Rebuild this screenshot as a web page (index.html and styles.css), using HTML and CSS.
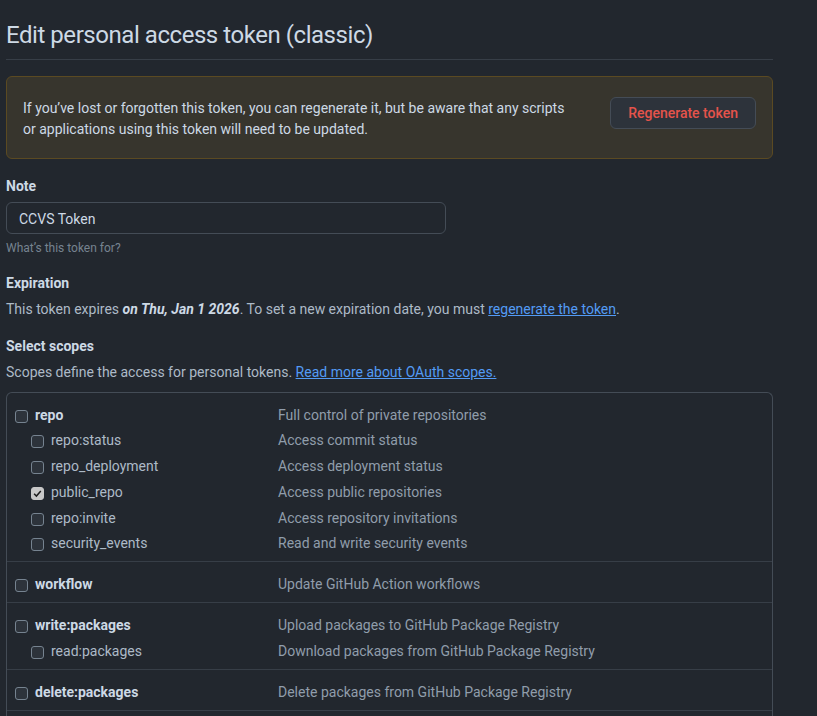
FILE: index.html
```html
<!DOCTYPE html>
<html>
<head>
<meta charset="utf-8">
<link rel="stylesheet" href="styles.css">
</head>
<body>
<div class="page">
  <h1 class="title">Edit personal access token (classic)</h1>

  <div class="flash">
    <p class="flash-text">If you’ve lost or forgotten this token, you can regenerate it, but be aware that any scripts<br>or applications using this token will need to be updated.</p>
    <button class="btn-danger">Regenerate token</button>
  </div>

  <div class="group group-note">
    <div class="label">Note</div>
    <div class="input">CCVS Token</div>
    <div class="hint">What’s this token for?</div>
  </div>

  <div class="group group-exp">
    <div class="label">Expiration</div>
    <p class="text">This token expires <em class="date">on Thu, Jan 1 2026</em>. To set a new expiration date, you must <a class="link" href="#">regenerate the token</a>.</p>
  </div>

  <div class="group group-scopes">
    <div class="label">Select scopes</div>
    <p class="text">Scopes define the access for personal tokens. <a class="link" href="#">Read more about OAuth scopes.</a></p>
  </div>

  <div class="scopes">
    <div class="scope-group">
      <div class="row main"><span class="name"><span class="cb"></span>repo</span><span class="desc">Full control of private repositories</span></div>
      <div class="row sub"><span class="name"><span class="cb"></span>repo:status</span><span class="desc">Access commit status</span></div>
      <div class="row sub"><span class="name"><span class="cb"></span>repo_deployment</span><span class="desc">Access deployment status</span></div>
      <div class="row sub"><span class="name"><span class="cb checked"><svg viewBox="0 0 12 12" width="11" height="11"><path d="M2.3 6.3 L4.8 8.8 L9.6 3.2" fill="none" stroke="#1c1c1c" stroke-width="1.6"/></svg></span>public_repo</span><span class="desc">Access public repositories</span></div>
      <div class="row sub"><span class="name"><span class="cb"></span>repo:invite</span><span class="desc">Access repository invitations</span></div>
      <div class="row sub"><span class="name"><span class="cb"></span>security_events</span><span class="desc">Read and write security events</span></div>
    </div>
    <div class="scope-group">
      <div class="row main"><span class="name"><span class="cb"></span>workflow</span><span class="desc">Update GitHub Action workflows</span></div>
    </div>
    <div class="scope-group">
      <div class="row main"><span class="name"><span class="cb"></span>write:packages</span><span class="desc">Upload packages to GitHub Package Registry</span></div>
      <div class="row sub"><span class="name"><span class="cb"></span>read:packages</span><span class="desc">Download packages from GitHub Package Registry</span></div>
    </div>
    <div class="scope-group">
      <div class="row main"><span class="name"><span class="cb"></span>delete:packages</span><span class="desc">Delete packages from GitHub Package Registry</span></div>
    </div>
    <div class="scope-group empty"></div>
  </div>
</div>
</body>
</html>
```

FILE: styles.css
```css
html, body {
  margin: 0;
  padding: 0;
  background: #22272e;
  height: 100%;
  overflow: hidden;
}
body {
  font-family: Roboto, "Noto Sans", sans-serif;
  font-size: 14px;
  line-height: 21px;
  color: #adbac7;
}
.page {
  width: 767px;
  padding-left: 6px;
}
.title {
  margin: 0 0 16px 0;
  padding: 20px 0 9px 0;
  font-size: 24px;
  line-height: 30px;
  font-weight: 400;
  letter-spacing: -0.45px;
  color: #cdd9e5;
  border-bottom: 1px solid #373e47;
}
.flash {
  display: flex;
  justify-content: space-between;
  align-items: flex-start;
  padding: 20px 16px 19px 16px;
  background: #37352d;
  border: 1px solid #5b4a22;
  border-radius: 6px;
}
.flash-text {
  margin: 0;
  padding-top: 1px;
  margin-bottom: -1px;
  color: #cdd9e5;
}
.btn-danger {
  height: 32px;
  padding: 0 17px;
  font-family: inherit;
  font-size: 14px;
  font-weight: 500;
  color: #e5534b;
  background: #2d333b;
  border: 1px solid #444c56;
  border-radius: 6px;
}
.group-note {
  margin-top: 17px;
}
.group-exp {
  margin-top: 16px;
}
.group-scopes {
  margin-top: 16px;
}
.label {
  font-weight: 700;
  color: #cdd9e5;
  line-height: 20px;
  margin-bottom: 6px;
}
.input {
  box-sizing: border-box;
  width: 440px;
  height: 32px;
  padding: 1px 12px 0 12px;
  line-height: 30px;
  color: #cdd9e5;
  background: #22272e;
  border: 1px solid #444c56;
  border-radius: 6px;
}
.hint {
  margin-top: 5px;
  font-size: 12px;
  line-height: 18px;
  color: #768390;
}
.text {
  margin: 0;
  margin-top: 2px;
}
.date {
  font-weight: 700;
  font-style: italic;
  color: #cdd9e5;
}
.link {
  color: #539bf5;
  text-decoration: underline;
}
.scopes {
  margin-top: 9px;
  border: 1px solid #444c56;
  border-radius: 6px 6px 0 0;
  border-bottom: none;
}
.scope-group {
  display: flex;
  flex-direction: column;
  gap: 4.8px;
  padding: 12px 8px 7px 8px;
  border-top: 1px solid #373e47;
}
.scope-group:first-child {
  border-top: none;
  padding-top: 11.5px;
  padding-bottom: 7px;
}
.scope-group.empty {
  height: 20px;
  padding: 0;
}
.row {
  display: flex;
  align-items: center;
  line-height: 21px;
}
.name {
  display: flex;
  align-items: center;
  width: 263px;
  flex: none;
}
.row.sub .name {
  padding-left: 16px;
  width: 247px;
}
.row.main .name {
  font-weight: 700;
  color: #cdd9e5;
}
.cb {
  box-sizing: border-box;
  display: inline-flex;
  align-items: center;
  justify-content: center;
  width: 13px;
  height: 13px;
  margin-right: 7px;
  margin-top: 2px;
  border: 1px solid #768390;
  border-radius: 3px;
  background: #2d333b;
}
.cb.checked {
  background: #c8c8c8;
  border-color: #c8c8c8;
}
.desc {
  color: #909dab;
}
```
